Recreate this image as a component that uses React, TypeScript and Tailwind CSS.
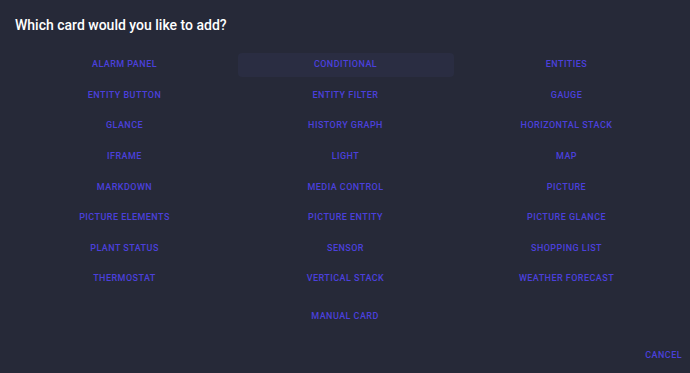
import React from 'react';

const cards = [
  'Alarm panel', 'Conditional', 'Entities',
  'Entity button', 'Entity filter', 'Gauge',
  'Glance', 'History graph', 'Horizontal stack',
  'Iframe', 'Light', 'Map',
  'Markdown', 'Media control', 'Picture',
  'Picture elements', 'Picture entity', 'Picture glance',
  'Plant status', 'Sensor', 'Shopping list',
  'Thermostat', 'Vertical stack', 'Weather forecast',
];

const CardButton = ({ label, active }: { label: string; active?: boolean }) => (
  <button
    className={`h-6 w-[216px] mx-auto block rounded text-[9px] font-medium uppercase tracking-[0.05em] text-[#4b40dc] ${
      active ? 'bg-[#2a2d42]' : ''
    }`}
  >
    {label}
  </button>
);

const App = () => {
  return (
    <div
      className="h-[373px] w-[690px] bg-[#262938] flex flex-col"
      style={{ fontFamily: 'Roboto, "Liberation Sans", sans-serif' }}
    >
      <h2 className="pl-[15px] pt-[16px] text-[14px] font-medium leading-[18px] text-white">
        Which card would you like to add?
      </h2>
      <div className="mt-[19px] ml-[14px] grid grid-cols-[repeat(3,221px)] gap-y-[6.6px]">
        {cards.map((c) => (
          <CardButton key={c} label={c} active={c === 'Conditional'} />
        ))}
      </div>
      <div className="mt-[14px] flex justify-center">
        <CardButton label="Manual card" />
      </div>
      <div className="mt-[15px] flex justify-end pr-[8px]">
        <button className="h-6 text-[9px] font-medium uppercase tracking-[0.05em] text-[#4b40dc]">
          Cancel
        </button>
      </div>
    </div>
  );
};

export default App;
